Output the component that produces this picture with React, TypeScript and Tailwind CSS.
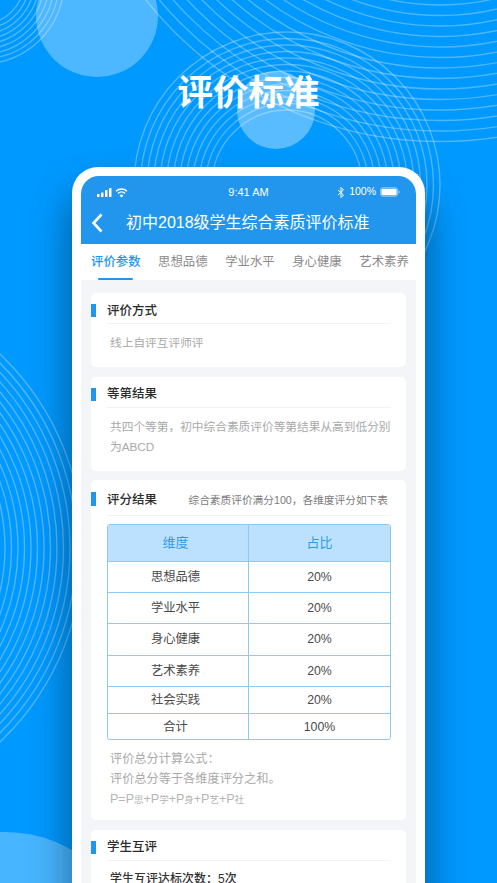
import React from 'react';

const FONT = "font-['Liberation_Sans','Noto_Sans_CJK_SC',sans-serif]";

const range = (from: number, to: number, step: number) => {
  const out: number[] = [];
  for (let r = from; r <= to; r += step) out.push(r);
  return out;
};

const tabs = ['评价参数', '思想品德', '学业水平', '身心健康', '艺术素养'];

const rows = [
  { name: '思想品德', pct: '20%', h: 'h-[31px]' },
  { name: '学业水平', pct: '20%', h: 'h-[31px]' },
  { name: '身心健康', pct: '20%', h: 'h-[32px]' },
  { name: '艺术素养', pct: '20%', h: 'h-[31px]' },
  { name: '社会实践', pct: '20%', h: 'h-[27px]' },
  { name: '合计', pct: '100%', h: 'h-[26px] [&>div]:pt-[2px]' },
];

// circles and line rings behind the phone
function Backdrop() {
  return (
    <svg className="absolute inset-0" width="497" height="883" viewBox="0 0 497 883" fill="none">
      <circle cx="97" cy="16" r="61" fill="#fff" fillOpacity="0.3" />
      <circle cx="276" cy="110" r="39" fill="#fff" fillOpacity="0.35" />
      <circle cx="5" cy="966" r="134" fill="#fff" fillOpacity="0.28" />
      <g stroke="#fff" strokeOpacity="0.3" strokeWidth="1.4">
        {range(75, 158, 6.5).map(r => <circle key={r} cx="287" cy="185" r={r} />)}
        {range(240, 381, 10.5).map(r => <circle key={r} cx="440" cy="-235" r={r} />)}
        {range(42, 82, 5).map(r => <circle key={r} cx="-18" cy="-18" r={r} />)}
        {range(190, 274, 6.5).map(r => <circle key={r} cx="-185" cy="548" r={r} />)}
      </g>
    </svg>
  );
}

function StatusBar() {
  return (
    <div className="flex items-center h-[32px] px-[16px] text-white relative">
      <svg width="31" height="11" viewBox="0 0 31 11" fill="white">
        <rect x="0" y="7" width="2.5" height="3" rx="0.5" />
        <rect x="4" y="5.5" width="2.5" height="4.5" rx="0.5" />
        <rect x="8" y="3" width="2.5" height="7" rx="0.5" />
        <rect x="12" y="1" width="2.5" height="9" rx="0.5" />
        <path d="M19 4.2a8 8 0 0 1 11 0M21 6.4a5 5 0 0 1 7 0" stroke="white" strokeWidth="1.4" fill="none" />
        <path d="M24.5 10.4l-1.9-2a2.7 2.7 0 0 1 3.8 0z" />
      </svg>
      <span className="absolute left-0 right-0 text-center text-[11px] font-medium">9:41 AM</span>
      <div className="ml-auto flex items-center gap-[4px]">
        <svg width="8" height="11" viewBox="0 0 8 11" fill="none" stroke="white" strokeWidth="1">
          <path d="M1 3l5.5 5L4 10.5v-10L6.5 3 1 8" />
        </svg>
        <span className="text-[10.5px]">100%</span>
        <svg width="20" height="10" viewBox="0 0 21 10" fill="white">
          <rect x="0.5" y="0.5" width="18" height="9" rx="2.5" fill="none" stroke="white" strokeOpacity="0.5" />
          <rect x="1.5" y="1.5" width="16" height="7" rx="1.5" />
          <rect x="19.5" y="3.5" width="1" height="3" rx="0.5" fillOpacity="0.6" />
        </svg>
      </div>
    </div>
  );
}

function CardTitle({ title, note, tall }: { title: string; note?: string; tall?: boolean }) {
  return (
    <div className={`relative flex items-center ml-[16px] mr-[15px] border-b border-[#f1f2f4] pt-[6px] ${tall ? 'h-[36px]' : 'h-[31px]'}`}>
      <span className={`absolute left-[-16px] w-[4.5px] bg-[#2196ec] ${tall ? 'top-[12px] h-[14px]' : 'top-[11px] h-[13px]'}`} />
      <span className="text-[12.5px] font-medium text-[#2b2b2b]">{title}</span>
      {note && <span className="ml-auto mr-[3px] text-[10.7px] text-[#7b7b7b] whitespace-nowrap">{note}</span>}
    </div>
  );
}

function ScoreTable() {
  return (
    <div className="mt-[8px] ml-[16px] mr-[15px] rounded-[3px] border border-[#8ccaf3] overflow-hidden text-[12.3px] text-[#4a4a4a]">
      <div className="flex h-[36px] bg-[#bbe1fe] text-[#2e9bea] text-[13px]">
        <div className="w-[141px] pr-[5px] border-r border-[#8ccaf3] flex items-center justify-center">维度</div>
        <div className="flex-1 flex items-center justify-center">占比</div>
      </div>
      {rows.map(row => (
        <div key={row.name} className={`flex border-t border-[#8ccaf3] ${row.h}`}>
          <div className="w-[141px] pr-[5px] border-r border-[#8ccaf3] flex items-center justify-center">{row.name}</div>
          <div className="flex-1 flex items-center justify-center">{row.pct}</div>
        </div>
      ))}
    </div>
  );
}

export default function App() {
  return (
    <div className={`relative w-[497px] h-[883px] overflow-hidden bg-[#0099ff] ${FONT}`}>
      <Backdrop />

      <h1 className="relative pt-[70px] h-[167px] text-center text-[35.5px] leading-[46px] font-bold text-white">评价标准</h1>

      <div className="relative ml-[72px] w-[353px] h-[740px] rounded-t-[26px] border-[9px] border-b-0 border-white bg-white shadow-[0_25px_40px_rgba(0,0,0,0.45)]">
        <div className="h-full rounded-t-[18px] overflow-hidden bg-[#f3f5f9]">
          <div className="h-[68px] bg-[#2196ec]">
            <StatusBar />
            <div className="flex items-center h-[30px] text-white">
              <svg className="ml-[10px]" width="12" height="20" viewBox="0 0 12 20" fill="none" stroke="white" strokeWidth="2.6">
                <path d="M10.5 1.5L2.5 10l8 8.5" />
              </svg>
              <span className="ml-[23px] text-[16px] whitespace-nowrap">初中2018级学生综合素质评价标准</span>
            </div>
          </div>

          <div className="relative flex h-[36px] items-center pl-[10px] gap-[17.5px] bg-white text-[12.4px] text-[#8b8b8b] whitespace-nowrap">
            {tabs.map((t, i) => (
              <span key={t} className={i === 0 ? 'font-medium text-[#2196ec]' : ''}>{t}</span>
            ))}
            <span className="absolute left-[17px] bottom-[0px] w-[35px] h-[2px] rounded-full bg-[#2196ec]" />
          </div>

          <div className="flex flex-col gap-[9.5px] px-[10px] pt-[13px] text-[11.7px] text-[#a9a9a9]">
            <section className="h-[74px] rounded-[5px] bg-white">
              <CardTitle title="评价方式" />
              <p className="mt-[9px] px-[19px] leading-[20px]">线上自评互评师评</p>
            </section>

            <section className="h-[94px] rounded-[5px] bg-white">
              <CardTitle title="等第结果" />
              <p className="mt-[9px] pl-[19px] pr-[14px] leading-[20px]">共四个等第，初中综合素质评价等第结果从高到低分别为ABCD</p>
            </section>

            <section className="h-[340px] rounded-[5px] bg-white">
              <CardTitle title="评分结果" note="综合素质评价满分100，各维度评分如下表" tall />
              <ScoreTable />
              <div className="mt-[9px] px-[19px] leading-[20px] text-[12.2px]">
                <p>评价总分计算公式：</p>
                <p>评价总分等于各维度评分之和。</p>
                <p className="text-[12.5px] text-[#b5b5b5]">
                  P=P<span className="text-[9.5px]">思</span>+P<span className="text-[9.5px]">学</span>+P<span className="text-[9.5px]">身</span>+P<span className="text-[9.5px]">艺</span>+P<span className="text-[9.5px]">社</span>
                </p>
              </div>
            </section>

            <section className="h-[60px] rounded-t-[5px] bg-white">
              <CardTitle title="学生互评" />
              <p className="mt-[9px] px-[19px] text-[12px] font-medium text-[#333]">学生互评达标次数：5次</p>
            </section>
          </div>
        </div>
      </div>
    </div>
  );
}
